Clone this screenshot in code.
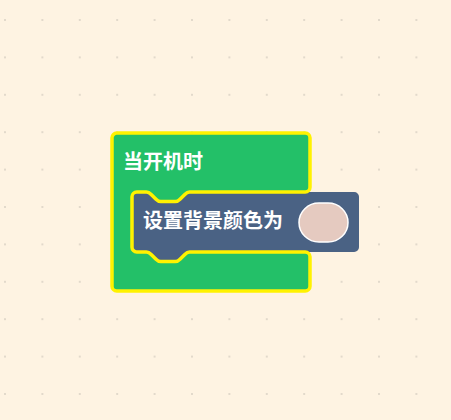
import React from 'react';

// scratch-style notch, scaled 1.2 — forward (left to right) and reversed (right to left)
const NOTCH_FWD = 'c 2.4,0 3.6,1.2 4.8,2.4 l 4.8,4.8 c 1.2,1.2 2.4,2.4 4.8,2.4 h 14.4 c 2.4,0 3.6,-1.2 4.8,-2.4 l 4.8,-4.8 c 1.2,-1.2 2.4,-2.4 4.8,-2.4';
const NOTCH_REV = 'c -2.4,0 -3.6,1.2 -4.8,2.4 l -4.8,4.8 c -1.2,1.2 -2.4,2.4 -4.8,2.4 h -14.4 c -2.4,0 -3.6,-1.2 -4.8,-2.4 l -4.8,-4.8 c -1.2,-1.2 -2.4,-2.4 -4.8,-2.4';

const outerPath = [
  'M 112,137.8 A 4.8 4.8 0 0 1 116.8,133 H 305.2 A 4.8 4.8 0 0 1 310,137.8',
  'V 187.2 A 4.8 4.8 0 0 1 305.2,192 H 189.6',
  NOTCH_REV,
  'H 136.8 A 4.8 4.8 0 0 0 132,196.8 V 247.2 A 4.8 4.8 0 0 0 136.8,252 H 146.4',
  NOTCH_FWD,
  'H 305.2 A 4.8 4.8 0 0 1 310,256.8 V 286.2 A 4.8 4.8 0 0 1 305.2,291 H 116.8 A 4.8 4.8 0 0 1 112,286.2 Z',
].join(' ');

const innerPath = [
  'M 132,196.8 A 4.8 4.8 0 0 1 136.8,192 H 146.4',
  NOTCH_FWD,
  'H 354.2 A 4.8 4.8 0 0 1 359,196.8 V 247.2 A 4.8 4.8 0 0 1 354.2,252 H 189.6',
  NOTCH_REV,
  'H 136.8 A 4.8 4.8 0 0 1 132,247.2 Z',
].join(' ');

const BlockCanvas: React.FC = () => (
  <svg width="451" height="420" viewBox="0 0 451 420" className="block">
    <defs>
      <pattern id="grid" x="4" y="19" width="37.4" height="37.4" patternUnits="userSpaceOnUse">
        <circle cx="1" cy="1" r="1" fill="#d9d0c3" />
      </pattern>
    </defs>
    <rect width="451" height="420" fill="url(#grid)" />

    {/* 当开机时 (selected C-block) */}
    <path d={outerPath} fill="#23c068" />
    <text
      x="123"
      y="169"
      className="fill-white font-bold text-[20px] font-['Noto_Sans_CJK_SC',sans-serif]"
    >
      当开机时
    </text>

    {/* 设置背景颜色为 */}
    <path d={innerPath} fill="#4a6284" />
    <text
      x="143"
      y="228"
      className="fill-white font-bold text-[20px] font-['Noto_Sans_CJK_SC',sans-serif]"
    >
      设置背景颜色为
    </text>
    <rect x="299" y="203" width="49" height="39" rx="20" ry="19.5" fill="#e5cac0" stroke="#ffffff" strokeWidth="1.5" />

    {/* selection outline drawn last */}
    <path d={outerPath} fill="none" stroke="#fff200" strokeWidth="3.5" strokeLinejoin="round" />
  </svg>
);

export default function App() {
  return (
    <div className="w-[451px] h-[420px] bg-[#fef3e2] overflow-hidden">
      <BlockCanvas />
    </div>
  );
}
